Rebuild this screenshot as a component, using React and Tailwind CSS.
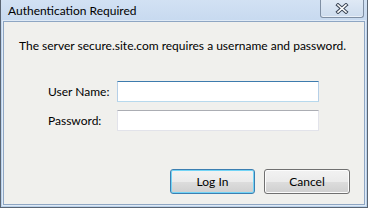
import React from "react";

const font = { fontFamily: '"Segoe UI", Lato, "Open Sans", sans-serif' };

function CloseGlyph() {
  return (
    <svg width="14" height="11" viewBox="0 0 14 11">
      <path d="M3 2 L11 9 M11 2 L3 9" stroke="#3b4656" strokeWidth="3.6" strokeLinecap="square" fill="none" />
      <path d="M3 2 L11 9 M11 2 L3 9" stroke="#ffffff" strokeWidth="1.6" strokeLinecap="square" fill="none" />
    </svg>
  );
}

function Button({ children, primary }) {
  return (
    <div
      className={
        "h-[25px] rounded-[3px] border flex items-center justify-center text-[12px] text-black bg-[linear-gradient(#f2f2f2_0%,#ebebeb_50%,#dddddd_51%,#cfcfcf_100%)] " +
        (primary
          ? "w-[85px] border-[#3c7fb1] shadow-[inset_0_0_0_1px_#72d4f6]"
          : "w-[86px] border-[#707070] shadow-[inset_0_0_0_1px_#fcfcfc]")
      }
    >
      {children}
    </div>
  );
}

export default function App() {
  return (
    <div className="w-[368px] h-[208px] flex flex-col border-x border-b border-[#5a6573] bg-[linear-gradient(#d2e1f3,#bcd2ec_20%,#b9d1ea)] px-[2px] pb-[2px]" style={font}>
      <div className="h-[21px] flex items-start justify-between shrink-0">
        <div className="pl-[5px] pt-[3px] text-[12px] leading-[15px] text-black whitespace-nowrap">Authentication Required</div>
        <div className="mr-[1px] w-[44px] h-[18px] rounded-b-[3px] border border-t-0 border-[#7f8fa4] bg-[linear-gradient(#dfe9f5,#cddcee)] shadow-[inset_0_-1px_0_#e9f0f8] flex items-center justify-center">
          <CloseGlyph />
        </div>
      </div>
      <div className="flex-1 border border-[#8ea6c3] bg-[#f0f0ed] shadow-[0_0_0_1px_#dfeaf6] flex flex-col">
        <div className="pt-[16px] pl-[15px] text-[12px] leading-[16px] text-black whitespace-nowrap">
          The server secure.site.com requires a username and password.
        </div>
        <div className="mt-[27px] flex flex-col gap-[8px]">
          <div className="flex items-center">
            <div className="w-[113px] pl-[44px] text-[12px] text-black whitespace-nowrap">User Name:</div>
            <div className="w-[202px] h-[21px] bg-white border border-[#b5cfe7] border-t-[#3d7bad] border-b-[#b7d9ed]" />
          </div>
          <div className="flex items-center">
            <div className="w-[113px] pl-[44px] text-[12px] text-black whitespace-nowrap">Password:</div>
            <div className="w-[202px] h-[21px] bg-white border border-[#e2e3ea] border-t-[#abadb3]" />
          </div>
        </div>
        <div className="mt-auto mb-[10px] mr-[14px] flex justify-end gap-[9px]">
          <Button primary>Log In</Button>
          <Button>Cancel</Button>
        </div>
      </div>
    </div>
  );
}
